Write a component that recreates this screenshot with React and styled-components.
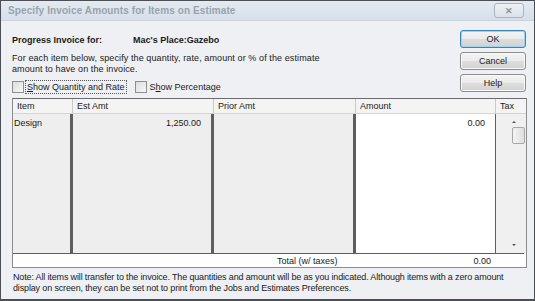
import React from "react";
import styled, { createGlobalStyle } from "styled-components";

const Global = createGlobalStyle`
  html, body { margin: 0; padding: 0; background: #eef0f3; }
  body { font-family: "Liberation Sans", Arial, sans-serif; }
`;

const Window = styled.div`
  width: 535px;
  height: 301px;
  box-sizing: border-box;
  border: 1px solid #4a4f55;
  border-bottom-width: 2px;
  background: #eef0f3;
  display: flex;
  flex-direction: column;
  font-size: 9px;
  color: #1a1a1a;
  overflow: hidden;
`;

const TitleBar = styled.div`
  height: 19px;
  flex: none;
  display: flex;
  align-items: center;
  justify-content: space-between;
  padding: 0 10px 0 7px;
  background: linear-gradient(#e3eaf1, #d6e0ea);
  border-bottom: 1px solid #c9d3dd;
`;

const Title = styled.span`
  font-weight: bold;
  font-size: 10px;
  color: #9aa3ac;
  letter-spacing: 0.1px;
`;

const CloseBtn = styled.div`
  width: 30px;
  height: 15px;
  box-sizing: border-box;
  border: 1px solid #aab4be;
  border-radius: 3px;
  background: linear-gradient(#eef2f6, #d9e1e9);
  color: #8a939c;
  font-size: 9px;
  font-weight: bold;
  display: flex;
  align-items: center;
  justify-content: center;
`;

const Body = styled.div`
  flex: 1;
  display: flex;
  flex-direction: column;
  padding: 0 8px 0 11px;
`;

const Top = styled.div`
  display: flex;
  justify-content: space-between;
  height: 77px;
`;

const Info = styled.div`
  display: flex;
  flex-direction: column;
  padding-top: 12px;
`;

const ProgressRow = styled.div`
  display: flex;
  font-weight: bold;
  height: 13px;
  align-items: center;
`;

const Label = styled.span`
  width: 121px;
`;

const Para = styled.p`
  margin: 7px 0 0;
  line-height: 11px;
  letter-spacing: 0.1px;
`;

const Checks = styled.div`
  display: flex;
  align-items: center;
  gap: 8px;
  margin-top: 5px;
`;

const CheckItem = styled.label`
  display: flex;
  align-items: center;
  gap: 1px;
`;

const Box = styled.span`
  width: 12px;
  height: 12px;
  box-sizing: border-box;
  border: 1px solid #8e8f8f;
  background: linear-gradient(135deg, #dcdcdc, #f8f8f8);
`;

const CheckText = styled.span`
  padding: 0 1px;
  border: 1px dotted ${({ focus }) => (focus ? "#555" : "transparent")};
  line-height: 12px;
`;

const U = styled.span`
  text-decoration: underline;
`;

const Buttons = styled.div`
  display: flex;
  flex-direction: column;
  gap: 4px;
  padding-top: 9px;
`;

const Button = styled.div`
  width: 66px;
  height: 18px;
  box-sizing: border-box;
  border: 1px solid ${({ primary }) => (primary ? "#3a84b8" : "#8c8c8c")};
  box-shadow: ${({ primary }) => (primary ? "inset 0 0 0 1px #9fd3ef" : "inset 0 0 0 1px #fafafa")};
  border-radius: 3px;
  background: linear-gradient(#f4f4f4 0%, #ebebeb 50%, #dddddd 51%, #d2d2d2 100%);
  display: flex;
  align-items: center;
  justify-content: center;
`;

const Table = styled.div`
  width: 515px;
  box-sizing: border-box;
  border: 1px solid #8b8b8b;
  border-top-color: #6b6b6b;
  background: #fff;
  display: flex;
  flex-direction: column;
`;

const cols = "60px 141px 142px 140px 1fr";

const HeadRow = styled.div`
  display: grid;
  grid-template-columns: ${cols};
  height: 14px;
  background: #f4f4f4;
  border-bottom: 1px solid #d4d4d4;
`;

const HeadCell = styled.div`
  padding-left: 4px;
  line-height: 14px;
  border-right: 1px solid ${({ last }) => (last ? "transparent" : "#c8c8c8")};
  color: #222;
`;

const BodyRow = styled.div`
  display: grid;
  grid-template-columns: ${cols};
  height: 139px;
`;

const Cell = styled.div`
  background: ${({ white }) => (white ? "#fff" : "#eeeeee")};
  border-right: ${({ sep }) => sep || "3px solid #5e5e5e"};
  text-align: ${({ right }) => (right ? "right" : "left")};
  padding: 3px ${({ right }) => (right ? "10px" : "0")} 0 ${({ right }) => (right ? "0" : "1px")};
  line-height: 12px;
`;

const Scroll = styled.div`
  background: #f0f0f0;
  display: flex;
  flex-direction: column;
  align-items: flex-start;
`;

const Arrow = styled.div`
  margin-left: 16px;
  width: 0;
  height: 0;
  border-left: 2px solid transparent;
  border-right: 2px solid transparent;
  ${({ down }) => (down ? "border-top: 2px solid #555;" : "border-bottom: 2px solid #555;")}
  margin-top: ${({ down }) => (down ? "auto" : "7px")};
  margin-bottom: ${({ down }) => (down ? "7px" : "0")};
`;

const Thumb = styled.div`
  margin-left: 16px;
  margin-top: 4px;
  width: 13px;
  height: 17px;
  box-sizing: border-box;
  border: 1px solid #a9a9a9;
  border-radius: 2px;
  background: linear-gradient(90deg, #f4f4f4, #dedede);
`;

const TotalRow = styled.div`
  display: flex;
  height: 13px;
  align-items: center;
  border-top: 1px solid #5e5e5e;
  background: #fff;
  margin-right: 2px;
`;

const TotalLabel = styled.span`
  margin-left: 264px;
`;

const TotalValue = styled.span`
  margin-left: auto;
  margin-right: 33px;
`;

const Note = styled.p`
  margin: 4px 0 0 1px;
  line-height: 10.5px;
  letter-spacing: -0.15px;
`;

export default function App() {
  return (
    <>
      <Global />
      <Window>
        <TitleBar>
          <Title>Specify Invoice Amounts for Items on Estimate</Title>
          <CloseBtn>✕</CloseBtn>
        </TitleBar>
        <Body>
          <Top>
            <Info>
              <ProgressRow>
                <Label>Progress Invoice for:</Label>
                <span>Mac's Place:Gazebo</span>
              </ProgressRow>
              <Para>
                For each item below, specify the quantity, rate, amount or % of the estimate
                <br />
                amount to have on the invoice.
              </Para>
              <Checks>
                <CheckItem>
                  <Box />
                  <CheckText focus>
                    <U>S</U>how Quantity and Rate
                  </CheckText>
                </CheckItem>
                <CheckItem>
                  <Box />
                  <CheckText>
                    S<U>h</U>ow Percentage
                  </CheckText>
                </CheckItem>
              </Checks>
            </Info>
            <Buttons>
              <Button primary>OK</Button>
              <Button>Cancel</Button>
              <Button>Help</Button>
            </Buttons>
          </Top>
          <Table>
            <HeadRow>
              <HeadCell>Item</HeadCell>
              <HeadCell>Est Amt</HeadCell>
              <HeadCell>Prior Amt</HeadCell>
              <HeadCell>Amount</HeadCell>
              <HeadCell last>Tax</HeadCell>
            </HeadRow>
            <BodyRow>
              <Cell>Design</Cell>
              <Cell right>1,250.00</Cell>
              <Cell />
              <Cell white right sep="1px solid #5e5e5e">0.00</Cell>
              <Scroll>
                <Arrow />
                <Thumb />
                <Arrow down />
              </Scroll>
            </BodyRow>
            <TotalRow>
              <TotalLabel>Total (w/ taxes)</TotalLabel>
              <TotalValue>0.00</TotalValue>
            </TotalRow>
          </Table>
          <Note>
            Note: All items will transfer to the invoice. The quantities and amount will be as you indicated. Although items with a zero amount
            <br />
            display on screen, they can be set not to print from the Jobs and Estimates Preferences.
          </Note>
        </Body>
      </Window>
    </>
  );
}
